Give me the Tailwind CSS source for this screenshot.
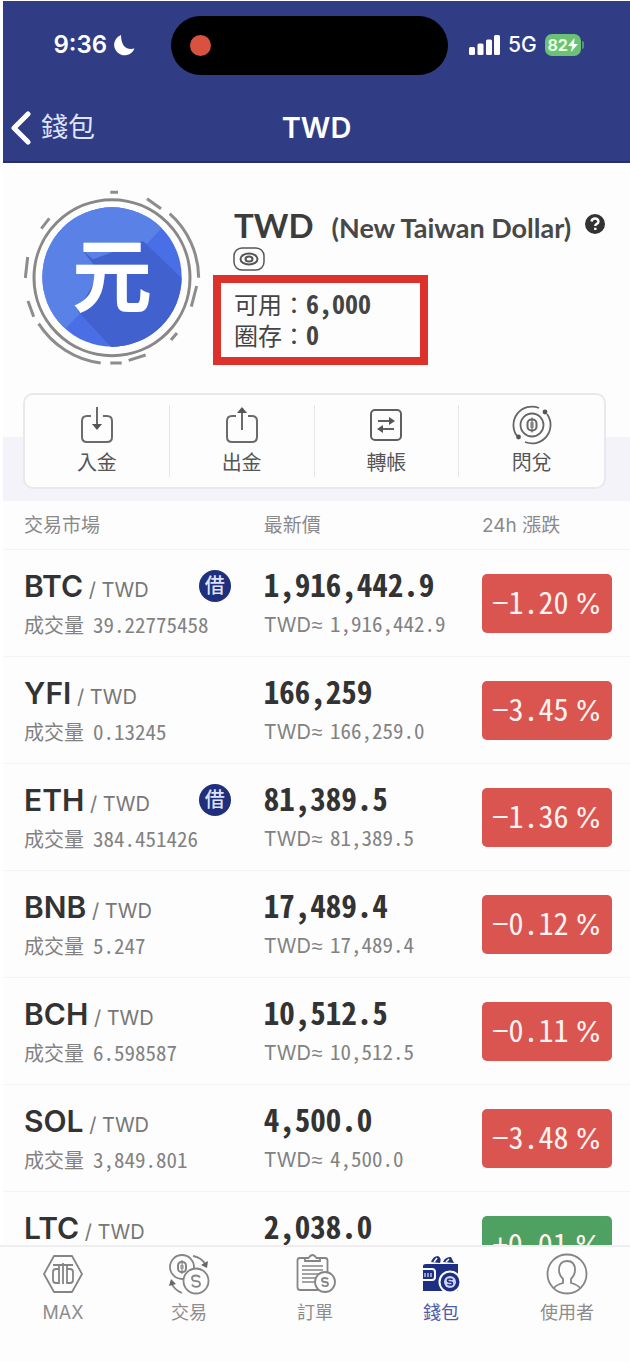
<!DOCTYPE html>
<html lang="zh-Hant">
<head>
<meta charset="utf-8">
<meta name="viewport" content="width=device-width, initial-scale=1">
<title>TWD 錢包</title>
<script src="https://cdn.jsdelivr.net/npm/@tailwindcss/browser@4"></script>
</head>
<body class="flex h-screen flex-col overflow-hidden bg-white pt-px font-['Inter','Noto_Sans_CJK_TC',sans-serif] text-[#333]">

<header class="ml-[3px] shrink-0 border-b-2 border-[#26306c] bg-[#303d85] text-white">
  <div class="grid h-[88px] grid-cols-[168px_277px_1fr] items-center">
    <div class="flex items-center justify-end gap-1.5 pr-9 text-2xl font-semibold">
      <span>9:36</span>
      <svg class="size-[22px]" viewBox="0 0 22 22" fill="#fff"><path d="M8 1A10.500 10.500 0 1 0 21.500 14.500 Q14.500 16 11 12 Q8 8 8 1Z"/></svg>
    </div>
    <div class="flex h-[59px] items-center rounded-full bg-black pl-[19px]"><span class="size-[21px] rounded-full bg-[#d9523f]"></span></div>
    <div class="flex items-center gap-2 pl-[21px]">
      <svg class="h-5 w-[31px]" viewBox="0 0 31 20" fill="#fff"><rect x="0" y="12" width="6" height="8" rx="1.500"/><rect x="8.500" y="8.500" width="6" height="11.500" rx="1.500"/><rect x="17" y="4.500" width="6" height="15.500" rx="1.500"/><rect x="25" y="0" width="6" height="20" rx="1.500"/></svg>
      <span class="text-[21px] font-medium">5G</span>
      <span class="flex items-center gap-px">
        <span class="flex h-[22px] w-9 items-center justify-center rounded-[7px] bg-[#6cc274] text-base font-bold text-[#e6ffe0]">82<svg class="h-4 w-[10px]" viewBox="0 0 10 16" fill="#fff"><path d="M6.500 1 0 9h4L3 15l7-8H6Z"/></svg></span>
        <span class="h-2 w-0.5 rounded-r-full bg-[#5b8f86]"></span>
      </span>
    </div>
  </div>
  <div class="grid h-[72px] grid-cols-3 items-center pt-1.5">
    <a href="#" class="flex items-center gap-2.5 pl-2 text-[27px] text-[#dfe4ff]">
      <svg class="h-[34px] w-5" viewBox="0 0 20 34" fill="none" stroke="#fff" stroke-width="5" stroke-linecap="round" stroke-linejoin="round"><path d="M17 3 3 17l14 14"/></svg>
      <span>錢包</span>
    </a>
    <h1 class="text-center text-[29px] font-semibold">TWD</h1>
  </div>
</header>

<main class="ml-[3px] min-h-0 flex-1 overflow-hidden bg-[#fdfdfe]">
  <section class="flex gap-[11px] pt-6 pl-[19px]">
    <svg class="size-[180px] shrink-0" viewBox="67 53 540 540" fill="none">
      <defs><clipPath id="coin"><circle cx="337" cy="323" r="209"/></clipPath></defs>
      <g clip-path="url(#coin)">
        <rect x="120" y="110" width="440" height="430" fill="#4a6ee6"/>
        <path d="M120 100H560L200 475 120 550Z" fill="#5a82e6"/>
        <path d="M248 242 280 270 430 215 560 340V560H360L235 425 300 310Z" fill="#4161cf"/>
        <path d="M235 425 300 390 400 560H360Z" fill="#4161cf"/>
      </g>
      <circle cx="337" cy="325" r="234" stroke="#8a8886" stroke-width="9"/>
      <path stroke="#8f8d8b" stroke-width="9" d="M332 69H355M442 88 484 118M510 133A260 260 0 0 1 597 325M591 350 575 412M532 491 514 512M438 557 387 573M366 581H332M303 581A260 260 0 0 1 117 463M102 442 85 395M77 326 84 263M125 178 149 147"/>
      <text x="337" y="407" text-anchor="middle" font-size="240" font-weight="700" font-family="Noto Sans CJK TC" fill="#fff">元</text>
    </svg>
    <div class="min-w-0 flex-1">
      <div class="flex h-[58px] items-baseline gap-[18px] pt-4 pl-[21px] font-['Lato',sans-serif] text-[#3c3c3c]">
        <h2 class="text-[33px] leading-[44px] font-bold">TWD</h2>
        <span class="text-[27px] leading-[44px] font-bold whitespace-nowrap text-[#484848]">(New Taiwan Dollar)</span>
        <button aria-label="說明" class="-ml-1 pb-1"><svg class="size-5" viewBox="0 0 20 20"><circle cx="10" cy="10" r="10" fill="#333"/><path d="M6.500 7.500Q7 4.500 10 4.500T13.500 7.500Q13.500 9 11.500 10 10.300 10.700 10.300 12M10.300 13.800v2.200" stroke="#fff" stroke-width="2.400" fill="none"/></svg></button>
      </div>
      <button aria-label="隱藏餘額" class="mt-0.5 ml-[20px] block h-6"><svg class="h-6 w-8" viewBox="0 0 32 24" fill="none" stroke="#555" stroke-width="1.500"><rect x="1" y="1" width="30" height="22" rx="8"/><ellipse cx="16" cy="12" rx="8.500" ry="5.500" stroke-width="2"/><ellipse cx="16" cy="12" rx="3.500" ry="2.500" stroke-width="2"/></svg></button>
      <div class="mt-1 h-[90px] w-[215px] border-8 border-[#dc322b] pt-[7px] pl-[13px] text-2xl leading-[31px] text-[#444]">
        <p>可用：<span class="font-['Noto_Sans_Mono_CJK_TC','Liberation_Mono',monospace] text-[26px] leading-none font-bold">6,000</span></p>
        <p>圈存：<span class="font-['Noto_Sans_Mono_CJK_TC','Liberation_Mono',monospace] text-[26px] leading-none font-bold">0</span></p>
      </div>
    </div>
  </section>

  <div class="mt-[26px] bg-[linear-gradient(#fdfdfe_44px,#f4f3fa_44px)] pr-6 pb-3 pl-5">
    <div class="grid h-24 grid-cols-4 items-center rounded-[10px] border-2 border-[#e9e8ec] bg-[#fdfdfe] text-xl text-[#555]">
      <button class="flex h-[72px] flex-col items-center justify-between border-r border-[#e6e6ea]">
        <svg class="size-10" viewBox="0 0 40 40" fill="none" stroke="#6b6b6b" stroke-width="2"><path d="M14 11H10Q5 11 5 16V32Q5 37 10 37H30Q35 37 35 32V16Q35 11 30 11H26M20 2V23"/><path d="m15 19 5 6 5-6Z" fill="#555" stroke="none"/></svg>
        <span class="leading-7">入金</span></button>
      <button class="flex h-[72px] flex-col items-center justify-between border-r border-[#e6e6ea]">
        <svg class="size-10" viewBox="0 0 40 40" fill="none" stroke="#6b6b6b" stroke-width="2"><path d="M14 11H10Q5 11 5 16V32Q5 37 10 37H30Q35 37 35 32V16Q35 11 30 11H26M20 5V25"/><path d="m15 8 5-6 5 6Z" fill="#555" stroke="none"/></svg>
        <span class="leading-7">出金</span></button>
      <button class="flex h-[72px] flex-col items-center justify-between border-r border-[#e6e6ea]">
        <svg class="size-10" viewBox="0 0 40 40" fill="none" stroke="#5f5f5f" stroke-width="2"><rect x="5" y="5" width="30" height="30" rx="4"/><path d="M12 16H25M28 24H15"/><path d="m23 12 6 4-6 4ZM17 20l-6 4 6 4Z" fill="#555" stroke="none"/></svg>
        <span class="leading-7">轉帳</span></button>
      <button class="flex h-[72px] flex-col items-center justify-between">
        <svg class="size-10" viewBox="0 0 40 40" fill="none" stroke="#666" stroke-width="1.800"><circle cx="20" cy="20" r="11.500"/><path d="M27 3A18.500 18.500 0 0 0 5 31M13 37A18.500 18.500 0 0 0 35 9"/><circle cx="33" cy="7" r="2.400" fill="#555" stroke="none"/><circle cx="6.500" cy="32" r="2.400" fill="#555" stroke="none"/><rect x="15.500" y="14.500" width="9" height="11" rx="4" stroke-width="2"/><path d="M18 18H22M18 20H22M18 22H22M20 12.500V27.500" stroke-width="1.200"/></svg>
        <span class="leading-7">閃兌</span></button>
    </div>
  </div>

  <table class="w-full table-fixed border-collapse text-left">
    <colgroup><col class="w-[41.6%]"><col class="w-[34.8%]"><col></colgroup>
    <thead class="text-[19px] text-[#8a8a8a]">
      <tr class="h-12 border-b border-[#f3f3f5]"><th class="pt-0.5 pl-[21px] font-normal">交易市場</th><th class="pt-0.5 font-normal">最新價</th><th class="pt-0.5 font-normal">24h 漲跌</th></tr>
    </thead>
    <tbody id="rows"></tbody>
  </table>
</main>

<nav class="grid shrink-0 grid-cols-5 border-t-2 border-[#efedf0] bg-[#fdfdfe] pt-1.5 pb-[35px] text-lg text-[#8d8d8d]">
  <a href="#" class="flex flex-col items-center gap-1">
    <svg class="size-[42px]" viewBox="0 0 42 42" fill="none" stroke="#858585" stroke-width="1.800" stroke-linejoin="round"><path d="M12 3H30L40 21 30 39H12L2 21Z"/><path d="M11 12H31M17 12V31M25 12V31M21 10V31M17 16H14Q11 16 11 19V27Q11 30 14 30H17M25 16H28Q31 16 31 19V27Q31 30 28 30H25"/></svg>
    <span class="leading-7">MAX</span></a>
  <a href="#" class="flex flex-col items-center gap-1">
    <svg class="size-[42px]" viewBox="0 0 42 42" fill="none" stroke="#858585" stroke-width="1.800"><circle cx="14" cy="14" r="12"/><rect x="10" y="9" width="8" height="10" rx="3.500" stroke-width="2"/><path d="M12 13H16M12 15H16M14 7V21" stroke-width="1.200"/><circle cx="28" cy="28" r="12.500" fill="#fdfdfe"/><path d="M32 24.500Q31 22.500 28 22.500 24 22.500 24 25.300T28 28.200 32 31 28 33.800Q25 33.800 24 31.500"/><path d="M25 3Q33 4 38 12M3 29Q6 37 14 40"/><path d="m40 8-1 7-6-3ZM1 33l2-7 5 5Z" fill="#666" stroke="none"/></svg>
    <span class="leading-7">交易</span></a>
  <a href="#" class="flex flex-col items-center gap-1">
    <svg class="size-[42px]" viewBox="0 0 42 42" fill="none" stroke="#858585" stroke-width="1.800"><path d="M12 5H6Q3.500 5 3.500 7.500V34Q3.500 37 6 37H24M26 5H31Q33.500 5 33.500 7.500V20M11 8V5H14.500Q18.500-1 22.500 5H26V8Z"/><path d="M8 13H29M8 17H29M8 21H27M8 25H23M8 29H21" stroke-width="1.400"/><circle cx="31" cy="29" r="10" fill="#fdfdfe"/><path d="M34 26.300Q33.300 25 31 25 28 25 28 27T31 29 34 31.200 31 33.200Q28.700 33.200 28 31.600"/></svg>
    <span class="leading-7">訂單</span></a>
  <a href="#" class="flex flex-col items-center gap-1 text-[#4d5ba8]" aria-current="page">
    <svg class="size-[42px]" viewBox="0 0 42 42" fill="none"><path d="M3 13Q3 11 6 11H38V38H3Z" fill="#1e2f83"/><path d="M11 9Q13 3 18 3Q22 5 20 10ZM23 9Q25 4 31 4L34 10Z" fill="#1e2f83"/><path d="M14 9l3-4M26 9l3-3" stroke="#fdfdfe" stroke-width="1.500"/><path d="M2 16H12Q15 16 15 19V24Q15 27 12 27H2Z" fill="#1e2f83" stroke="#fdfdfe" stroke-width="2"/><path d="M5 20v4M8 20v4M11 20v4" stroke="#cdd3f2" stroke-width="1.300"/><circle cx="30" cy="29" r="10.500" fill="#1e2f83" stroke="#fdfdfe" stroke-width="2"/><circle cx="30" cy="29" r="6" fill="#cdd3f2"/><path d="M32.500 27Q32 26 30 26 27.500 26 27.500 27.500T30 29 32.500 30.500 30 32Q28 32 27.500 31" stroke="#1e2f83" stroke-width="1.600"/></svg>
    <span class="leading-7">錢包</span></a>
  <a href="#" class="flex flex-col items-center gap-1">
    <svg class="size-[42px]" viewBox="0 0 42 42" fill="none" stroke="#858585" stroke-width="1.800"><circle cx="21" cy="21" r="19.500"/><path d="M8 35Q10 32 17 30V26Q13 22 13 17 13 8 21 8T29 17Q29 22 25 26V30Q32 32 34 35"/></svg>
    <span class="leading-7">使用者</span></a>
</nav>

<script>
  const markets = [
    ['BTC', '39.22775458', '1,916,442.9', '1,916,442.9', '−1.20', true],
    ['YFI', '0.13245', '166,259', '166,259.0', '−3.45'],
    ['ETH', '384.451426', '81,389.5', '81,389.5', '−1.36', true],
    ['BNB', '5.247', '17,489.4', '17,489.4', '−0.12'],
    ['BCH', '6.598587', '10,512.5', '10,512.5', '−0.11'],
    ['SOL', '3,849.801', '4,500.0', '4,500.0', '−3.48'],
    ['LTC', '', '2,038.0', '', '+0.01'],
  ];
  const mono = `font-['Noto_Sans_Mono_CJK_TC','Liberation_Mono',monospace]`;
  document.getElementById('rows').innerHTML = markets.map(([coin, volume, price, approx, change, loan]) => `
    <tr class="h-[107px] border-b border-[#f3f3f5] align-top">
      <td class="pt-[17px] pl-[21px]">
        <div class="flex h-[38px] items-center justify-between pr-[33px]">
          <div class="whitespace-nowrap"><span class="text-[30px] leading-[38px] font-semibold">${coin}</span><span class="text-xl text-[#777]"> / TWD</span></div>
          ${loan ? '<span class="flex size-8 items-center justify-center rounded-full bg-[#1f2f7c] text-xl leading-none font-medium text-[#dde2ff]">借</span>' : ''}
        </div>
        ${volume && `<div class="flex h-[38px] items-baseline gap-[9px] text-xl leading-[38px] whitespace-nowrap text-[#828282]">成交量 <span class="${mono} text-[21px] leading-[38px]">${volume}</span></div>`}
      </td>
      <td class="pt-4">
        <div class="${mono} flex h-[38px] items-center text-[31px] font-bold">${price}</div>
        ${approx && `<div class="flex h-[38px] items-baseline text-xl leading-[38px] whitespace-nowrap text-[#828282]">TWD<span class="font-['Liberation_Mono',monospace]">≈</span><span class="${mono} ml-[7px] text-[21px] leading-[38px]">${approx}</span></div>`}
      </td>
      <td class="pt-6 pr-[18px]">
        <div class="${mono} flex h-[59px] items-baseline justify-center gap-1.5 rounded-[5px] ${change.startsWith('+') ? 'bg-[#4fa162]' : 'bg-[#db5550]'} text-[30px] leading-[54px] text-[#fff3f1]"><span>${change}</span><span class="font-['Inter',sans-serif] text-[28px]">%</span></div>
      </td>
    </tr>`).join('');
</script>
</body>
</html>
